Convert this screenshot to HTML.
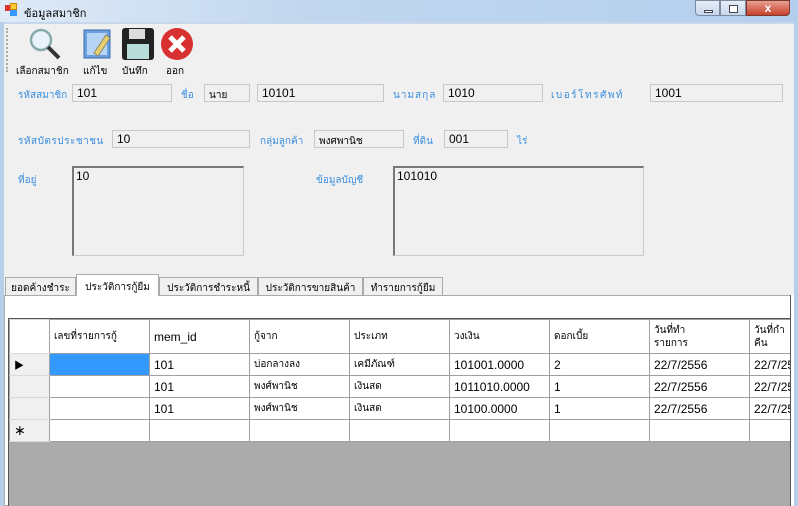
<!DOCTYPE html>
<html><head><meta charset="utf-8"><style>
*{margin:0;padding:0;box-sizing:border-box}
body{width:798px;height:506px;overflow:hidden;background:#f0f0f0;font-family:"Liberation Sans","Noto Sans CJK SC",sans-serif;font-size:11px;position:relative;color:#000}
.a{position:absolute}
.lbl{position:absolute;color:#3a8ee0;font-size:10px;white-space:nowrap}
.tb{position:absolute;background:#f0f0f0;border:1px solid #c8c8c8;height:18px;padding:1px 4px;font-size:12px}
.ml{position:absolute;background:#f0f0f0;border:1px solid #ccc;border-top:2px solid #777;border-left:2px solid #777;padding:1px 2px;font-size:12px}
.tab{position:absolute;top:277px;height:18px;border:1px solid #aaa;border-bottom:none;background:#f0f0f0;font-size:10px;padding:3px 0 0 0;text-align:center;white-space:nowrap;overflow:hidden}
table{border-collapse:collapse;table-layout:fixed}
td{border:1px solid #a0a0a0;background:#fff;height:22px;padding:0 4px;font-size:12px;white-space:nowrap;overflow:hidden}
tr.h td{height:34px;font-size:10px;background:#fff}
td.rh{background:#f0f0f0;border-color:#d8d8d8 #a0a0a0}
.th{font-size:10px}
</style></head><body>
<div class="a" style="left:0;top:0;width:798px;height:22px;background:linear-gradient(90deg,#dfeaf6,#c0d6ee 40%,#b4cfee)"></div>
<div class="a" style="left:5px;top:5px;width:6px;height:6px;background:#d33"></div>
<div class="a" style="left:10px;top:3px;width:7px;height:7px;background:#fc3;border:1px solid #c80"></div>
<div class="a" style="left:10px;top:10px;width:7px;height:6px;background:#39f"></div>
<div class="a" style="left:24px;top:4px;font-size:11px">ข้อมูลสมาชิก</div>
<div class="a" style="left:695px;top:0;width:25px;height:16px;border:1px solid #7a8aa0;border-radius:0 0 0 4px;background:linear-gradient(#e6eef8,#c6d6ea)"><div class="a" style="left:8px;top:9px;width:9px;height:3px;background:#fff;border:1px solid #445"></div></div>
<div class="a" style="left:720px;top:0;width:26px;height:16px;border:1px solid #7a8aa0;background:linear-gradient(#e6eef8,#c6d6ea)"><div class="a" style="left:8px;top:4px;width:9px;height:8px;border:1px solid #445;background:#fff"></div></div>
<div class="a" style="left:746px;top:0;width:44px;height:16px;border:1px solid #7a3a30;border-radius:0 0 4px 0;background:linear-gradient(#e8a090,#c8402c);color:#fff;font-weight:bold;text-align:center;font-size:12px;line-height:14px">x</div>
<div class="a" style="left:0;top:22px;width:4px;height:484px;background:#b8cfea"></div>
<div class="a" style="left:794px;top:22px;width:4px;height:484px;background:#b8cfea"></div>
<div class="a" style="left:4px;top:22px;width:790px;height:2px;background:#c8d8ec"></div>
<div class="a" style="left:6px;top:28px;width:1px;height:44px;border-left:2px dotted #aaa"></div>
<svg class="a" style="left:28px;top:27px" width="34" height="34"><circle cx="13" cy="13" r="10" fill="#e8f4fa" stroke="#8aa" stroke-width="2.5"/><line x1="20" y1="20" x2="31" y2="31" stroke="#333" stroke-width="4"/></svg>
<svg class="a" style="left:82px;top:27px" width="32" height="34"><rect x="2" y="3" width="26" height="28" fill="#6aa0dd" stroke="#3a6ab0"/><rect x="5" y="6" width="20" height="22" fill="#b6d4f4"/><path d="M12 26 L24 8 L28 11 L16 29 Z" fill="#e8d070" stroke="#886"/></svg>
<svg class="a" style="left:121px;top:27px" width="34" height="34"><rect x="1" y="1" width="32" height="32" rx="3" fill="#222"/><rect x="8" y="2" width="16" height="10" fill="#ddd"/><rect x="6" y="17" width="22" height="15" fill="#b8ddd8"/></svg>
<svg class="a" style="left:160px;top:27px" width="34" height="34"><circle cx="17" cy="17" r="16" fill="#d83030"/><path d="M10 10 L24 24 M24 10 L10 24" stroke="#fff" stroke-width="5"/></svg>
<div class="a" style="left:16px;top:64px;font-size:10px">เลือกสมาชิก</div>
<div class="a" style="left:83px;top:64px;font-size:10px">แก้ไข</div>
<div class="a" style="left:122px;top:64px;font-size:10px">บันทึก</div>
<div class="a" style="left:166px;top:64px;font-size:10px">ออก</div>
<div class="lbl" style="left:18px;top:88px">รหัสสมาชิก</div>
<div class="tb" style="left:72px;top:84px;width:100px">101</div>
<div class="lbl" style="left:181px;top:88px">ชื่อ</div>
<div class="tb" style="left:204px;top:84px;width:46px;font-size:10px;padding-top:3px">นาย</div>
<div class="tb" style="left:257px;top:84px;width:127px">10101</div>
<div class="lbl" style="left:393px;top:88px;letter-spacing:1px">นามสกุล</div>
<div class="tb" style="left:443px;top:84px;width:100px">1010</div>
<div class="lbl" style="left:551px;top:88px;letter-spacing:1.5px">เบอร์โทรศัพท์</div>
<div class="tb" style="left:650px;top:84px;width:133px">1001</div>
<div class="lbl" style="left:18px;top:134px;letter-spacing:0.5px">รหัสบัตรประชาชน</div>
<div class="tb" style="left:112px;top:130px;width:138px">10</div>
<div class="lbl" style="left:260px;top:134px">กลุ่มลูกค้า</div>
<div class="tb" style="left:314px;top:130px;width:90px;font-size:10px;padding-top:3px">พงศพานิช</div>
<div class="lbl" style="left:413px;top:134px">ที่ดิน</div>
<div class="tb" style="left:444px;top:130px;width:64px">001</div>
<div class="lbl" style="left:517px;top:134px">ไร่</div>
<div class="lbl" style="left:18px;top:173px">ที่อยู่</div>
<div class="ml" style="left:72px;top:166px;width:172px;height:90px">10</div>
<div class="lbl" style="left:316px;top:173px">ข้อมูลบัญชี</div>
<div class="ml" style="left:393px;top:166px;width:251px;height:90px">101010</div>
<div class="a" style="left:4px;top:295px;width:790px;height:211px;background:#fff;border:1px solid #aaa"></div>
<div class="tab" style="left:5px;width:71px">ยอดค้างชำระ</div>
<div class="tab" style="left:76px;top:274px;width:83px;height:22px;background:#fff;padding-top:5px">ประวัติการกู้ยืม</div>
<div class="tab" style="left:159px;width:99px">ประวัติการชำระหนี้</div>
<div class="tab" style="left:258px;width:105px">ประวัติการขายสินค้า</div>
<div class="tab" style="left:363px;width:80px">ทำรายการกู้ยืม</div>
<div class="a" style="left:8px;top:318px;width:782px;height:188px;background:#ababab;border-left:1px solid #555;border-top:1px solid #555;overflow:hidden">
<table style="width:842px">
<colgroup><col style="width:40px"><col style="width:100px"><col style="width:100px"><col style="width:100px"><col style="width:100px"><col style="width:100px"><col style="width:100px"><col style="width:100px"><col style="width:102px"></colgroup>
<tr class="h"><td class="rh"></td><td>เลขที่รายการกู้</td><td style="font-size:12px">mem_id</td><td>กู้จาก</td><td>ประเภท</td><td>วงเงิน</td><td>ดอกเบี้ย</td><td style="line-height:13px">วันที่ทำ<br>รายการ</td><td style="line-height:13px">วันที่กำ<br>คืน</td></tr>
<tr><td class="rh" style="font-size:10px">&#9654;</td><td style="background:#3399ff"></td><td>101</td><td class="th">บ่อกลางลง</td><td class="th">เคมีภัณฑ์</td><td>101001.0000</td><td>2</td><td>22/7/2556</td><td>22/7/2556</td></tr>
<tr><td class="rh"></td><td></td><td>101</td><td class="th">พงศ์พานิช</td><td class="th">เงินสด</td><td>1011010.0000</td><td>1</td><td>22/7/2556</td><td>22/7/2556</td></tr>
<tr><td class="rh"></td><td></td><td>101</td><td class="th">พงศ์พานิช</td><td class="th">เงินสด</td><td>10100.0000</td><td>1</td><td>22/7/2556</td><td>22/7/2556</td></tr>
<tr><td class="rh" style="font-size:14px">&#8727;</td><td></td><td></td><td></td><td></td><td></td><td></td><td></td><td></td></tr>
</table></div>
<div class="a" style="left:790px;top:295px;width:4px;height:211px;background:#fff;border-left:1px solid #555"></div>
</body></html>
